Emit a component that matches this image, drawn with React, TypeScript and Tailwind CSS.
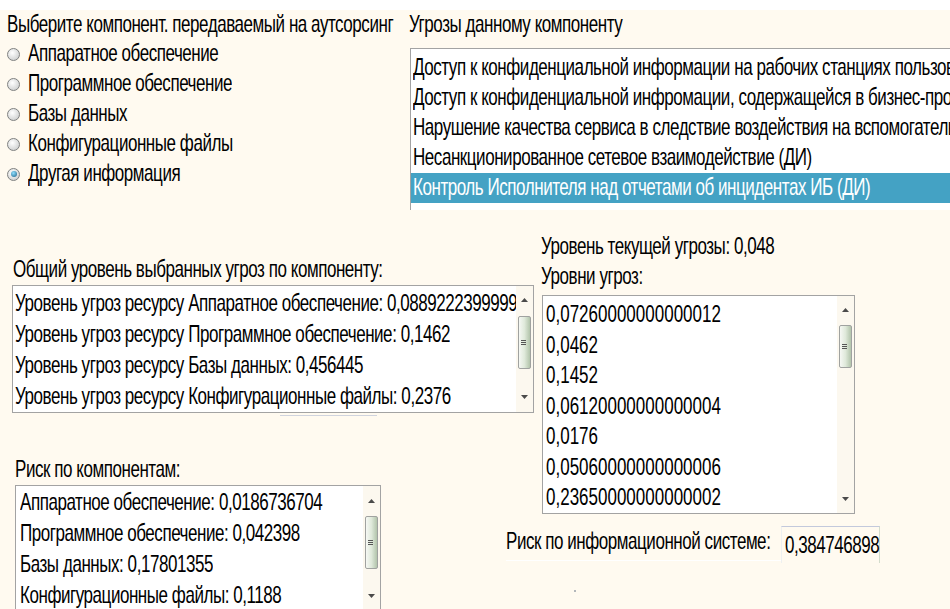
import { useState, type ReactNode } from "react";

const components = [
  "Аппаратное обеспечение",
  "Программное обеспечение",
  "Базы данных",
  "Конфигурационные файлы",
  "Другая информация",
];

const threats = [
  "Доступ к конфиденциальной информации на рабочих станциях пользователей",
  "Доступ к конфиденциальной инфромации, содержащейся в бизнес-процессах",
  "Нарушение качества сервиса в следствие воздействия на вспомогательные системы",
  "Несанкционированное сетевое взаимодействие (ДИ)",
  "Контроль Исполнителя над отчетами об инцидентах ИБ (ДИ)",
];

const totals = [
  "Уровень угроз ресурсу Аппаратное обеспечение: 0,08892223999999",
  "Уровень угроз ресурсу Программное обеспечение: 0,1462",
  "Уровень угроз ресурсу Базы данных: 0,456445",
  "Уровень угроз ресурсу Конфигурационные файлы: 0,2376",
];

const levels = [
  "0,07260000000000012",
  "0,0462",
  "0,1452",
  "0,06120000000000004",
  "0,0176",
  "0,05060000000000006",
  "0,23650000000000002",
];

const risks = [
  "Аппаратное обеспечение: 0,0186736704",
  "Программное обеспечение: 0,042398",
  "Базы данных: 0,17801355",
  "Конфигурационные файлы: 0,1188",
];

// шрифт формы вытянут по вертикали и чуть сжат
function T({
  children,
  className = "",
  digits = false,
}: {
  children: ReactNode;
  className?: string;
  digits?: boolean;
}) {
  return (
    <span
      className={
        "inline-block whitespace-nowrap scale-y-[1.4] " +
        (digits ? "tracking-normal " : "tracking-[-0.45px] ") +
        className
      }
    >
      {children}
    </span>
  );
}

function Radio({ checked }: { checked: boolean }) {
  return (
    <span className="flex h-[13px] w-[13px] shrink-0 items-center justify-center rounded-full border border-[#7f8181] bg-[radial-gradient(circle_at_40%_35%,#ffffff,#c3c5c5)]">
      {checked && (
        <span className="h-[6px] w-[6px] rounded-full bg-[radial-gradient(circle_at_40%_35%,#8fe0ff,#1b5f86)]" />
      )}
    </span>
  );
}

function Arrow({ up }: { up?: boolean }) {
  return (
    <svg width="7" height="4" viewBox="0 0 7 4">
      <polygon points={up ? "0,4 3.5,0 7,4" : "0,0 3.5,4 7,0"} fill="#4a4a4a" />
    </svg>
  );
}

// вертикальная полоса прокрутки списка
function ScrollBar({ upH, thumb, downH }: { upH: string; thumb: string; downH: string }) {
  return (
    <div className="flex w-[17px] shrink-0 flex-col items-center bg-[#fcf8ef]">
      <div className={"flex items-center justify-center " + upH}>
        <Arrow up />
      </div>
      <div
        className={
          "flex w-[13px] items-center justify-center rounded-[2px] border border-[#a0a2a0] bg-gradient-to-r from-[#f6f8f4] via-[#dfe9da] to-[#b2c4ab] " +
          thumb
        }
      >
        <div className="flex flex-col gap-[1px] pr-[2px]">
          <div className="h-px w-[5px] bg-[#555]" />
          <div className="h-px w-[5px] bg-[#555]" />
          <div className="h-px w-[5px] bg-[#555]" />
        </div>
      </div>
      <div className="flex-1" />
      <div className={"flex items-center justify-center " + downH}>
        <Arrow />
      </div>
    </div>
  );
}

export default function App() {
  const [component, setComponent] = useState(4);
  const [threat, setThreat] = useState(4);

  return (
    <div className="h-[609px] w-[950px] overflow-hidden bg-[#fffaf0] font-['Liberation_Sans',Arial,sans-serif] text-[17px] leading-[30px] text-black">
      <div className="h-[10px] bg-white" />

      {/* выбор компонента и угрозы */}
      <div className="flex h-[200px]">
        <div className="w-[409px] shrink-0 pl-[7px]">
          <div className="h-[29px] leading-[29px]">
            <T>Выберите компонент. передаваемый на аутсорсинг</T>
          </div>
          {components.map((c, i) => (
            <div
              key={c}
              onClick={() => setComponent(i)}
              className="flex h-[30px] cursor-pointer items-center"
            >
              <Radio checked={component === i} />
              <T className="ml-[8px]">{c}</T>
            </div>
          ))}
        </div>

        <div className="flex-1 overflow-hidden">
          <div className="h-[29px] leading-[29px]">
            <T>Угрозы данному компоненту</T>
          </div>
          <div className="ml-px mt-[9px] h-[162px] w-[600px] border-l border-t border-[#a3a3a3] bg-white pt-[4px]">
            {threats.map((t, i) => (
              <div
                key={t}
                onClick={() => setThreat(i)}
                className={
                  "h-[30px] cursor-pointer pl-[2px] " +
                  (threat === i ? "bg-[#44a2c4] text-white" : "")
                }
              >
                <T>{t}</T>
              </div>
            ))}
          </div>
        </div>
      </div>

      <div className="flex">
        {/* уровни по компонентам и риски */}
        <div className="w-[541px] shrink-0 pl-[12px]">
          <div className="mt-[45px] h-[30px] pl-px">
            <T>Общий уровень выбранных угроз по компоненту:</T>
          </div>
          <div className="flex h-[128px] w-[522px] border border-[#a3a3a3] bg-white">
            <div className="flex-1 overflow-hidden pl-[2px] pt-[2px]">
              {totals.map((t) => (
                <div key={t} className="h-[31px] leading-[31px]">
                  <T>{t}</T>
                </div>
              ))}
            </div>
            <ScrollBar upH="h-[28px]" thumb="mt-[2px] h-[53px]" downH="h-[30px]" />
          </div>
          <div className="ml-[268px] mt-[2px] h-px w-[97px] bg-[#cfd3de]" />

          <div className="ml-[3px] mt-[39px] h-[30px]">
            <T>Риск по компонентам:</T>
          </div>
          <div className="ml-[3px] flex h-[127px] w-[366px] border border-[#a3a3a3] bg-white">
            <div className="flex-1 overflow-hidden pl-[4px] pt-px">
              {risks.map((r) => (
                <div key={r} className="h-[31px] leading-[31px]">
                  <T>{r}</T>
                </div>
              ))}
            </div>
            <ScrollBar upH="h-[30px]" thumb="h-[53px]" downH="h-[30px]" />
          </div>
        </div>

        {/* уровни угроз и общий риск */}
        <div className="flex-1">
          <div className="mt-[22px] h-[30px]">
            <T>Уровень текущей угрозы: 0,048</T>
          </div>
          <div className="h-[30px]">
            <T>Уровни угроз:</T>
          </div>
          <div className="ml-px mt-[3px] flex h-[219px] w-[313px] border border-[#a3a3a3] bg-white">
            <div className="flex-1 overflow-hidden pl-[3px] pt-[4px]">
              {levels.map((l) => (
                <div key={l} className="h-[30.5px] leading-[30.5px]">
                  <T digits>{l}</T>
                </div>
              ))}
            </div>
            <ScrollBar upH="h-[28px]" thumb="mt-px h-[43px]" downH="h-[28px]" />
          </div>

          <div className="-ml-[35px] mt-[12px] flex h-[37px] items-start">
            <div className="w-[275px] shrink-0">
              <div className="h-[32px] leading-[32px]">
                <T>Риск по информационной системе:</T>
              </div>
              <div className="mt-[2px] h-px w-[275px] bg-white" />
            </div>
            <div className="h-[37px] w-[99px] border-l border-r border-t border-l-[#eef0f0] border-r-[#d3dccc] border-t-[#c3c9dc] pl-[3px] pt-[2px] leading-[34px]">
              <T>0,384746898</T>
            </div>
          </div>
          <div className="ml-[33px] mt-[27px] h-[2px] w-[2px] rounded-full bg-[#9aa0aa]" />
        </div>
      </div>
    </div>
  );
}
